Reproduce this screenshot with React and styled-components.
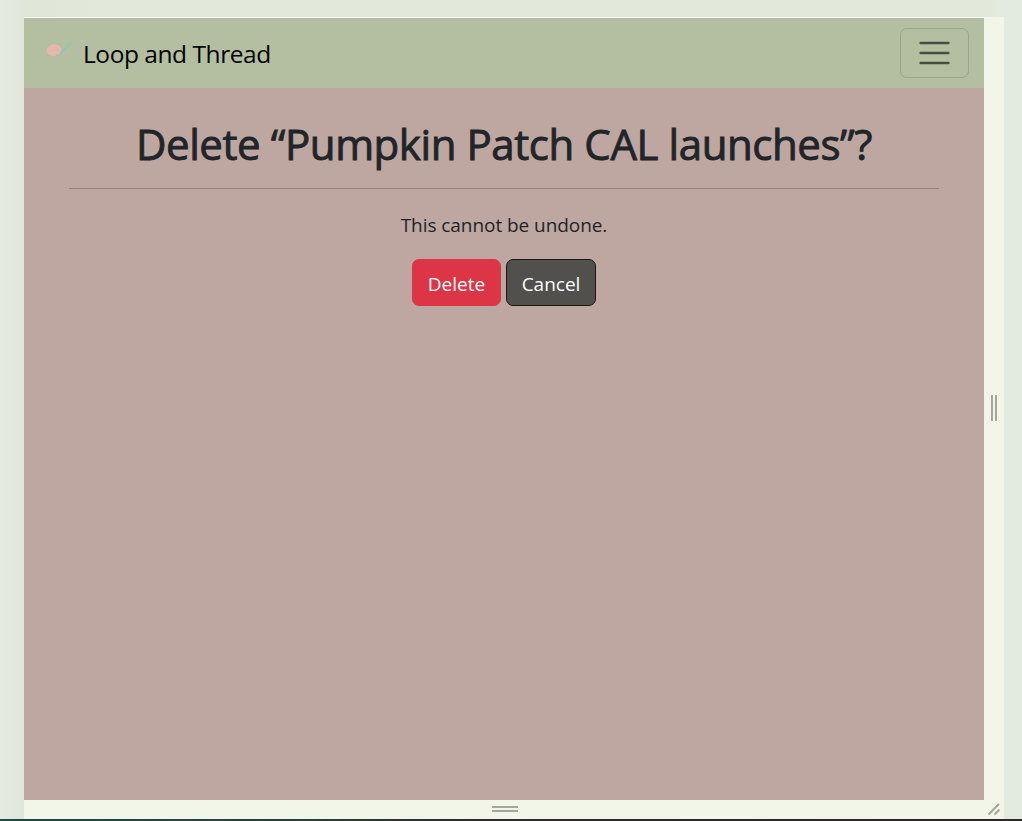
import React from "react";
import styled, { createGlobalStyle } from "styled-components";

const GlobalStyle = createGlobalStyle`
  * { box-sizing: border-box; }
  body { margin: 0; overflow: hidden; font-family: "Segoe UI", "Open Sans", "Noto Sans", sans-serif; }
`;

const Workspace = styled.div`
  height: 821px;
  padding: 17px 18px 0 24px;
  display: flex;
  flex-direction: column;
  background: linear-gradient(90deg, #e4ebe0 0, #e0e7d9 24px, #e2e9da 120px, #e2e9da 985px, #e3eae0 1004px, #e3eae0 100%);
`;

const Frame = styled.div`
  flex: 1;
  min-height: 0;
  display: grid;
  grid-template-columns: 960px 20px;
  grid-template-rows: 783px 1fr;
  background: #f1f6e8;
`;

const Screen = styled.div`
  display: flex;
  flex-direction: column;
  border-top: 1px solid #fff;
  background: #bda7a0;
`;

const Navbar = styled.header`
  height: 70px;
  padding: 0 15px 0 22px;
  display: flex;
  align-items: center;
  justify-content: space-between;
  background: #b3bfa0;
`;

const Brand = styled.div`
  display: flex;
  align-items: center;
  gap: 7px;
  color: #000;
  font-size: 24.5px;
  line-height: 36px;
`;

const BrandName = styled.span`
  letter-spacing: -0.45px;
  white-space: nowrap;
  padding-top: 2px;
`;

const Toggler = styled.button`
  width: 69px;
  height: 50px;
  padding: 0;
  display: flex;
  align-items: center;
  justify-content: center;
  border: 1px solid #9aa68a;
  border-radius: 7px;
  background: transparent;
`;

const Main = styled.main`
  padding: 30px 45px 0;
  display: flex;
  flex-direction: column;
  align-items: center;
  color: #212529;
`;

const Title = styled.h1`
  margin: 0;
  font-size: 42px;
  line-height: 51px;
  font-weight: 500;
  letter-spacing: -0.42px;
  -webkit-text-stroke: 0.9px currentColor;
  white-space: nowrap;
`;

const Rule = styled.hr`
  width: 870px;
  height: 1px;
  margin: 19px 0 22px;
  border: 0;
  background: #96827d;
`;

const Message = styled.p`
  margin: 0 0 19px;
  font-size: 19px;
  line-height: 29px;
  letter-spacing: -0.06px;
  white-space: nowrap;
`;

const Actions = styled.div`
  display: flex;
  gap: 5px;
`;

const Button = styled.button`
  width: ${(p) => p.$width};
  height: 47px;
  padding: 3px 0 0;
  border: 1px solid ${(p) => p.$border};
  border-radius: 7px;
  background: ${(p) => p.$fill};
  color: #fff;
  font: inherit;
  font-size: 19px;
  white-space: nowrap;
`;

const Handle = styled.div`
  display: flex;
  align-items: center;
  justify-content: center;
  padding: 0 0 2px ${(p) => p.$shift || "0"};
`;

const Footline = styled.div`
  height: 2px;
  margin: 0 -18px 0 -24px;
  background: linear-gradient(90deg, #214747 0, #29403f 300px, #2d2a2a 480px, #2c2725 100%);
`;

const YarnLogo = () => (
  <svg width="30" height="30" viewBox="0 0 30 30">
    <ellipse cx="8.3" cy="12.4" rx="7.5" ry="5.8" fill="#e8b8ac" />
    <path d="M3 10q5-3 8 6M7 8q5 1 6 6M3 14q5-4 10-2" fill="none" stroke="#dfb0a5" strokeWidth=".5" />
    <path d="M10 17.5Q15 17 17 12.5" fill="none" stroke="#94c4b4" strokeWidth="1.3" />
    <path d="M14.5 14.5L25.5 5" fill="none" stroke="#8ac8b8" strokeWidth="1.7" />
  </svg>
);

const MenuIcon = () => (
  <svg width="36" height="36" viewBox="0 0 36 36">
    <path d="M4 8H32M4 18H32M4 28H32" transform="translate(-.5 0)" stroke="#464e40" strokeWidth="2.3" strokeLinecap="round" />
  </svg>
);

export default function App() {
  return (
    <>
      <GlobalStyle />
      <Workspace>
        <Frame>
          <Screen>
            <Navbar>
              <Brand>
                <YarnLogo />
                <BrandName>Loop and Thread</BrandName>
              </Brand>
              <Toggler aria-label="Toggle navigation">
                <MenuIcon />
              </Toggler>
            </Navbar>
            <Main>
              <Title>Delete “Pumpkin Patch CAL launches”?</Title>
              <Rule />
              <Message>This cannot be undone.</Message>
              <Actions>
                <Button $width="89px" $fill="#dc3545" $border="#dc3545">Delete</Button>
                <Button $width="90px" $fill="#52504d" $border="#191817">Cancel</Button>
              </Actions>
            </Main>
          </Screen>
          <Handle>
            <svg width="20" height="26" viewBox="0 0 20 26">
              <path d="M8 0V26M12 0V26" stroke="#a3a79e" strokeWidth="2" />
            </svg>
          </Handle>
          <Handle $shift="2px">
            <svg width="26" height="8" viewBox="0 0 26 8">
              <path d="M0 2H26M0 6H26" stroke="#a3a79e" strokeWidth="2" />
            </svg>
          </Handle>
          <Handle>
            <svg width="20" height="18" viewBox="0 0 20 18">
              <path d="M4.5 14.5L15 4M10.5 14.5L15.5 9.5" stroke="#a3a79e" strokeWidth="2" />
            </svg>
          </Handle>
        </Frame>
        <Footline />
      </Workspace>
    </>
  );
}
